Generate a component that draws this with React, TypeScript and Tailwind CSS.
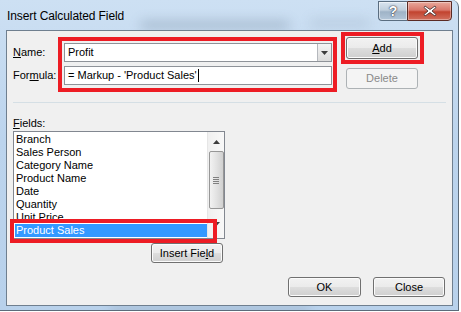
import * as React from 'react';

const FIELDS = ['Branch', 'Sales Person', 'Category Name', 'Product Name', 'Date', 'Quantity', 'Unit Price', 'Product Sales'];

const Btn = ({ children, className = '' }: { children: React.ReactNode; className?: string }) => (
  <div
    className={`flex items-center justify-center rounded-[3px] border border-[#707070] bg-[linear-gradient(#f2f2f2_0%,#ebebeb_48%,#dddddd_52%,#cfcfcf_100%)] text-[11px] leading-none text-black shadow-[inset_0_0_0_1px_#fbfbfb] ${className}`}
  >
    {children}
  </div>
);

const ArrowUp = () => (
  <svg width="7" height="4" viewBox="0 0 7 4">
    <path d="M3.5 0 L7 4 L0 4 Z" fill="#3d3d3d" />
  </svg>
);

const ArrowDown = () => (
  <svg width="7" height="4" viewBox="0 0 7 4">
    <path d="M0 0 L7 0 L3.5 4 Z" fill="#3d3d3d" />
  </svg>
);

export default function App() {
  return (
    <div className="relative h-[312px] w-[461px] overflow-hidden bg-white font-['Liberation_Sans',Arial,sans-serif]">
      <div className="relative flex h-[311px] w-[459px] flex-col overflow-hidden rounded-tr-[7px] border-r border-b border-[#5c6b7a] bg-[linear-gradient(180deg,#cde0f3_0%,#bcd4ed_45%,#b8d1eb_100%)]">
        {/* blurred glass behind title */}
        <div className="pointer-events-none absolute left-[140px] top-[21px] h-[8px] w-[150px] rounded-full bg-[#6f849a] opacity-40 blur-[6px]" />
        <div className="pointer-events-none absolute left-[310px] top-[19px] h-[8px] w-[60px] rounded-full bg-[#8ea2b6] opacity-30 blur-[6px]" />
        <div className="pointer-events-none absolute left-[110px] top-[307px] h-[5px] w-[200px] rounded-full bg-[#7f93a8] opacity-40 blur-[4px]" />

        {/* title bar */}
        <div className="relative flex h-[30px] shrink-0 items-start">
          <div className="mt-[9px] pl-[7px] text-[12px] leading-[14px] tracking-[-0.1px] text-black">Insert Calculated Field</div>
          <div className="ml-auto mr-[6px] mt-[1px] flex h-[20px]">
            <div className="flex w-[29px] items-center justify-center rounded-bl-[4px] border border-r-0 border-[#5a6d80] bg-[linear-gradient(#d9e4ef_0%,#c0cfdd_45%,#9fb3c7_55%,#b3c6d9_100%)] shadow-[inset_0_0_0_1px_rgba(255,255,255,0.5)]">
              <span className="text-[14px] font-bold leading-none text-white [text-shadow:0_0_1px_#223,0_0_2px_#334]">?</span>
            </div>
            <div className="flex w-[45px] items-center justify-center rounded-br-[4px] border border-[#5a2a24] bg-[linear-gradient(#e9a99c_0%,#d9776a_45%,#c2432f_55%,#d2705e_100%)] shadow-[inset_0_0_0_1px_rgba(255,255,255,0.35)]">
              <svg width="14" height="12" viewBox="0 0 14 12">
                <path d="M2 1 L7 4.5 L12 1 L13 2.5 L9 6 L13 9.5 L12 11 L7 7.5 L2 11 L1 9.5 L5 6 L1 2.5 Z" fill="#ffffff" stroke="#3b2b2b" strokeWidth="0.8" strokeLinejoin="round" />
              </svg>
            </div>
          </div>
        </div>

        {/* client area */}
        <div className="relative ml-[6px] mr-[5px] flex h-[276px] shrink-0 flex-col border border-[#6f7f8f] bg-[#f0f0f0] pt-[1px] text-[11px] text-black">
          {/* top row */}
          <div className="flex pl-[6px]">
            <div className="flex w-[45px] flex-col gap-[4px] pt-[11px]">
              <div className="flex h-[19px] items-center">
                <span><span className="underline">N</span>ame:</span>
              </div>
              <div className="flex h-[19px] items-center">
                <span>For<span className="underline">m</span>ula:</span>
              </div>
            </div>
            <div className="mt-[5px] flex h-[55px] w-[279px] flex-col gap-[4px] border-4 border-[#ed1c24] pb-[3px] pl-[2px] pr-[1px] pt-[2px]">
              <div className="flex h-[19px] items-center border border-[#8f9399] bg-white">
                <span className="flex-1 pl-[3px]">Profit</span>
                <div className="flex h-[17px] w-[14px] items-center justify-center border-l border-[#b5b8bd] bg-[linear-gradient(#f4f4f4,#dcdcdc)]">
                  <ArrowDown />
                </div>
              </div>
              <div className="flex h-[19px] items-center border border-[#8f9399] bg-white pl-[3px]">
                <span>= Markup - 'Product Sales'</span>
                <span className="ml-[1px] h-[13px] w-[1px] bg-black" />
              </div>
            </div>
            <div className="ml-[4px] flex w-[83px] flex-col">
              <div className="h-[32px] border-4 border-[#ed1c24] pl-[1px] pt-[1px]">
                <Btn className="h-[22px] w-[72px] border-[#3c7fb1] shadow-[inset_0_0_0_1px_#7fdcf7]">
                  <span><span className="underline">A</span>dd</span>
                </Btn>
              </div>
              <div className="ml-[5px] mt-[4px] flex h-[21px] w-[72px] items-center justify-center rounded-[3px] border border-[#adb2b5] bg-[#f4f4f4] text-[11px] text-[#8a8a8a]">
                Delete
              </div>
            </div>
          </div>

          {/* separator */}
          <div className="mx-[6px] mt-[10px] h-[1px] bg-[#d5dfe5]" />

          {/* fields */}
          <div className="ml-[6px] mt-[13px] h-[15px] leading-[15px]">
            <span className="underline">F</span>ields:
          </div>
          <div className="ml-[6px] flex w-[212px] flex-col">
            <div className="relative flex h-[108px] border border-[#828790] bg-white">
              <div className="flex flex-1 flex-col overflow-hidden pt-[1px]">
                {FIELDS.map((f) => (
                  <div
                    key={f}
                    className={
                      f === 'Product Sales'
                        ? 'ml-[1px] h-[13px] shrink-0 bg-[#3399ff] pl-[1px] leading-[13px] text-white'
                        : 'ml-[1px] h-[13px] shrink-0 pl-[1px] leading-[13px]'
                    }
                  >
                    {f}
                  </div>
                ))}
              </div>
              <div className="flex w-[17px] flex-col items-center border-l border-[#e6e6e6] bg-[linear-gradient(90deg,#f0f0f0,#f8f8f8)]">
                <div className="flex h-[19px] items-center justify-center pt-[1px]">
                  <ArrowUp />
                </div>
                <div className="flex h-[58px] w-[15px] flex-col items-center justify-center gap-[1px] rounded-[2px] border border-[#979797] bg-[linear-gradient(90deg,#f2f2f2,#e2e2e2_50%,#d0d0d0)]">
                  <div className="h-[1px] w-[6px] bg-[#808080]" />
                  <div className="h-[1px] w-[6px] bg-[#808080]" />
                  <div className="h-[1px] w-[6px] bg-[#808080]" />
                  <div className="h-[1px] w-[6px] bg-[#808080]" />
                </div>
                <div className="flex flex-1 items-center justify-center">
                  <ArrowDown />
                </div>
              </div>
              {/* annotation box */}
              <div className="absolute left-[-4px] top-[87px] h-[24px] w-[207px] border-4 border-[#ed1c24]" />
            </div>
            <Btn className="mr-[2px] mt-[4px] h-[20px] w-[72px] self-end">
              <span>Insert Fie<span className="underline">l</span>d</span>
            </Btn>
          </div>

          {/* bottom buttons */}
          <div className="mt-[14px] flex justify-end gap-[12px] pr-[7px]">
            <Btn className="h-[20px] w-[73px]">OK</Btn>
            <Btn className="h-[20px] w-[72px]">Close</Btn>
          </div>
        </div>
      </div>
    </div>
  );
}
